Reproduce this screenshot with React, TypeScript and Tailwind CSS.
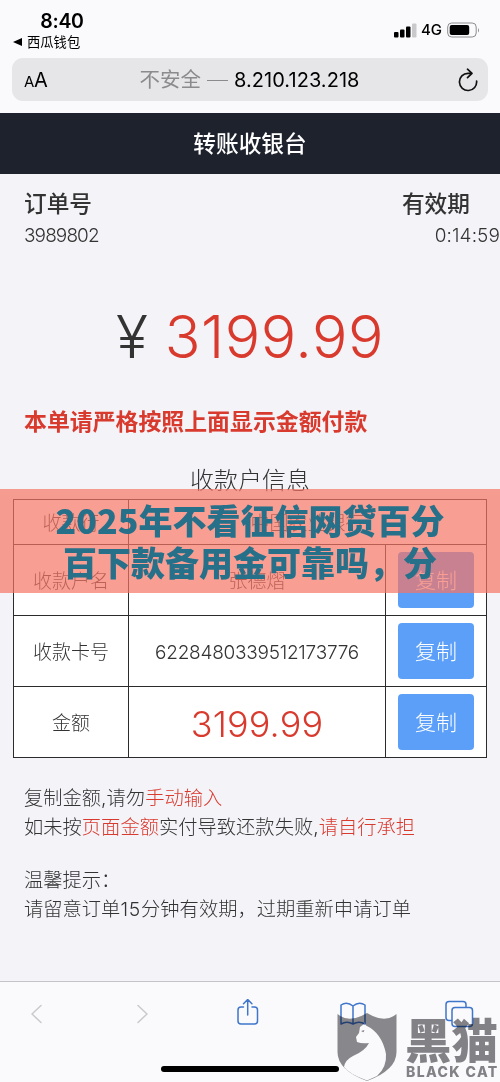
import React from "react";

interface PayRowProps {
  label: string;
  children: React.ReactNode;
}

const CopyButton = () => (
  <div className="flex w-[101px] shrink-0 items-center justify-center border-l border-[#2b2b2b]">
    <button className="h-[56px] w-[76px] rounded-[4px] bg-[#5b9ff8] pt-[2px] text-[21px] font-light text-white">
      复制
    </button>
  </div>
);

const PayRow: React.FC<PayRowProps> = ({ label, children }) => (
  <div className="flex h-[71px] border-b border-[#2b2b2b]">
    <div className="flex w-[115px] shrink-0 items-center justify-center border-r border-[#2b2b2b] pt-[3px] text-[19px]">
      {label}
    </div>
    <div className="flex flex-1 items-center justify-center pt-[3px]">{children}</div>
    <CopyButton />
  </div>
);

const StatusBar = () => (
  <div className="flex h-[58px] justify-between text-black">
    <div className="w-[124px]">
      <div className="mt-[10px] text-center text-[19.5px] leading-[23px] font-semibold tracking-[-0.3px]">8:40</div>
      <div className="flex items-center pl-[13px] text-[13.3px] leading-[18px]">
        <svg viewBox="0 0 9 8" className="mr-[5px] h-[8px] w-[9px]">
          <path d="M0 4 9 0v8z" />
        </svg>
        西瓜钱包
      </div>
    </div>
    <div className="mt-[20px] mr-[20px] flex h-[20px] items-center">
      <svg viewBox="0 0 23 15" className="h-[15px] w-[23px]">
        <rect x="0" y="9" width="4.5" height="5.5" rx="1" />
        <rect x="6" y="6.500" width="4.500" height="8" rx="1" />
        <rect x="12" y="3.500" width="4.500" height="11" rx="1" />
        <rect x="18" y="0.500" width="4.500" height="14" rx="1" fill="#c9c9cb" />
      </svg>
      <span className="ml-[4px] w-[22px] text-[15px] leading-[20px] font-medium">4G</span>
      <svg viewBox="0 0 33 16" className="ml-[4px] h-[16px] w-[33px]">
        <rect x="0.700" y="1" width="28.500" height="14" rx="4" fill="none" stroke="#8c8c8e" strokeWidth="1" />
        <rect x="2.700" y="3" width="19.500" height="10" rx="2" />
        <path d="M31 6v4.500q2-2.200 0-4.500" fill="#8c8c8e" />
      </svg>
    </div>
  </div>
);

const AddressBar = () => (
  <div className="mx-[12px] flex h-[43px] items-center rounded-[11px] bg-[#e6e6e8] text-black">
    <div className="w-[47px] pt-[2px] pl-[12px] leading-[30px] tracking-[-0.3px]">
      <span className="text-[15px]">A</span>
      <span className="text-[20px]">A</span>
    </div>
    <div className="flex flex-1 items-center justify-center pt-[1px] text-[20px] leading-[30px]">
      <span className="text-[20.500px] text-[#8b8b8d]">不安全</span>
      <span className="mx-[6px] h-px w-[21px] bg-[#8b8b8d]" />
      <span className="tracking-[0.05px]">8.210.123.218</span>
    </div>
    <svg viewBox="0 0 22 24" className="mr-[9px] ml-[17px] h-[24px] w-[22px]" fill="none" stroke="#111" strokeWidth="1.7" strokeLinecap="round" strokeLinejoin="round">
      <path d="M14.500 5.300H11A8.600 8.600 0 1 0 19.600 13M10.500 1.200l4.500 4.100-4.500 4.300" />
    </svg>
  </div>
);

const Toolbar = () => (
  <div className="flex h-[101px] items-start border-t border-[#c3c3c8] bg-[#fafafc] pt-[17px]">
    <svg viewBox="0 0 500 40" className="h-[40px] w-[500px]" fill="none" strokeLinecap="round" strokeLinejoin="round">
      <g stroke="#cacace" strokeWidth="1.500">
        <path d="m41 6.500-9 8.500 9 8.500" />
        <path d="m138 6.500 9 8.500-9 8.500" />
      </g>
      <g stroke="#3f75cb" strokeWidth="1.500">
        <path d="M243.500 8H241q-3 0-3 3v11q0 3 3 3h13.500q3 0 3-3V11q0-3-3-3H252M247.700 16V1M243.500 4.700l4.200-4.200 4.200 4.200" />
        <path d="M353 7v18q-6-3.500-12 0V6q6-4 12 1 6-5 12-1v19q-6-3.500-12 0" />
        <rect x="446" y="2.500" width="20" height="19" rx="3" />
        <rect x="452" y="8.500" width="20.500" height="19" rx="3" fill="#fafafc" />
      </g>
    </svg>
  </div>
);

const BlackCatMark = () => (
  <div className="absolute top-[1010px] left-[337px] flex h-[72px] w-[163px] text-[#858488] mix-blend-multiply">
    <svg viewBox="0 0 60 72" className="h-[72px] w-[60px] shrink-0">
      <path
        d="M0.500 4Q12 14 30 3q18 11 29.500 1v38q0 18-29.500 29Q0.500 60 0.500 42z"
        fill="currentColor"
        fillOpacity="0.95"
      />
      <path
        d="M27.500 12 29 15.500Q45 23 49 44q1 13-9 22L30 70.500Q12 64 7 57q1-7 9-11 12-5 16-13-7 1-12-1l-1-5 3-4 1-6 4-3z"
        fill="#fff"
      />
      <path d="m24 21 3.500-1-1 2.200z" fill="currentColor" />
    </svg>
    <div className="ml-[8px] w-[95px] shrink-0 font-['Noto_Sans_CJK_SC',sans-serif] whitespace-nowrap">
      <div className="mt-[7px] text-[46.500px] leading-[42px] font-black">黑猫</div>
      <div className="mt-[4px] pl-[1px] font-['Inter',sans-serif] text-[14px] leading-[18px] font-extrabold tracking-[1.4px]">
        BLACK CAT
      </div>
    </div>
  </div>
);

export default function App() {
  return (
    <div className="relative h-[1082px] w-[500px] overflow-hidden bg-[#f4f3f8] font-['Inter','Noto_Sans_CJK_SC',sans-serif] text-[#333]">
      <div className="h-[113px] bg-[#fafafc]">
        <StatusBar />
        <AddressBar />
      </div>

      <header className="flex h-[61px] items-center justify-center bg-[#1e222d] pt-[2px] text-[22.7px] font-medium text-white">
        转账收银台
      </header>

      <main className="h-[807px] font-light">
        {/* Order number and countdown */}
        <div className="flex justify-between pt-[14px] pl-[24px]">
          <div>
            <div className="text-[22.7px] leading-[32px] font-medium">订单号</div>
            <div className="pt-px text-[19px] leading-[30px] tracking-[-0.9px]">3989802</div>
          </div>
          <div className="text-right">
            <div className="pr-[30px] text-[22.7px] leading-[32px] font-medium">有效期</div>
            <div className="pt-px text-[19px] leading-[30px] tracking-[0.1px]">0:14:59</div>
          </div>
        </div>

        {/* Amount */}
        <div className="mt-[49px] flex h-[74px] items-center justify-center text-[59px] leading-[74px]">
          <span className="mr-[17px]">¥</span>
          <span className="tracking-[0.5px] text-[#d93a2e]">3199.99</span>
        </div>

        <p className="mt-[32px] pl-[24px] text-[22.9px] leading-[32px] font-bold text-[#d93a2e]">
          本单请严格按照上面显示金额付款
        </p>

        <h2 className="mt-[25px] text-center text-[24px] leading-[36px] font-light">收款户信息</h2>

        {/* Payee table */}
        <div className="ml-[13px] w-[474px] border border-b-0 border-[#2b2b2b] bg-white leading-[30px]">
          <div className="flex h-[45px] border-b border-[#2b2b2b] text-[19px]">
            <div className="flex w-[115px] items-center justify-center border-r border-[#2b2b2b] pt-[3px]">收款行</div>
            <div className="flex flex-1 items-center justify-center pt-[3px]">中国农业银行</div>
          </div>
          <PayRow label="收款户名">
            <span className="text-[19px]">张德熠</span>
          </PayRow>
          <PayRow label="收款卡号">
            <span className="text-[19px] tracking-[-0.25px]">6228480339512173776</span>
          </PayRow>
          <PayRow label="金额">
            <span className="text-[36px] tracking-[0.1px] text-[#d93a2e]">3199.99</span>
          </PayRow>
        </div>

        {/* Notes */}
        <div className="mt-[26px] pl-[24px] text-[19.3px] leading-[29px]">
          <p>
            复制金额,请勿<span className="text-[#d93a2e]">手动输入</span>
          </p>
          <p>
            如未按<span className="text-[#d93a2e]">页面金额</span>实付导致还款失败,
            <span className="text-[#d93a2e]">请自行承担</span>
          </p>
          <p className="mt-[24px]">温馨提示：</p>
          <p>
            请留意订单<span className="tracking-[0.8px]">15</span>分钟有效期，过期重新申请订单
          </p>
        </div>
      </main>

      <Toolbar />

      {/* Home indicator */}
      <div className="absolute top-[1066px] left-[161px] h-[6px] w-[178px] rounded-full bg-black" />

      <BlackCatMark />

      {/* Title banner */}
      <div className="absolute top-[489px] left-0 h-[104px] w-[500px] bg-[#f57564]/70 py-[10px] text-center font-['Noto_Sans_CJK_SC',sans-serif] text-[34px] leading-[42px] font-black whitespace-nowrap text-[#27708a]">
        <div>2025年不看征信网贷百分</div>
        <div>百下款备用金可靠吗，分</div>
      </div>
    </div>
  );
}
